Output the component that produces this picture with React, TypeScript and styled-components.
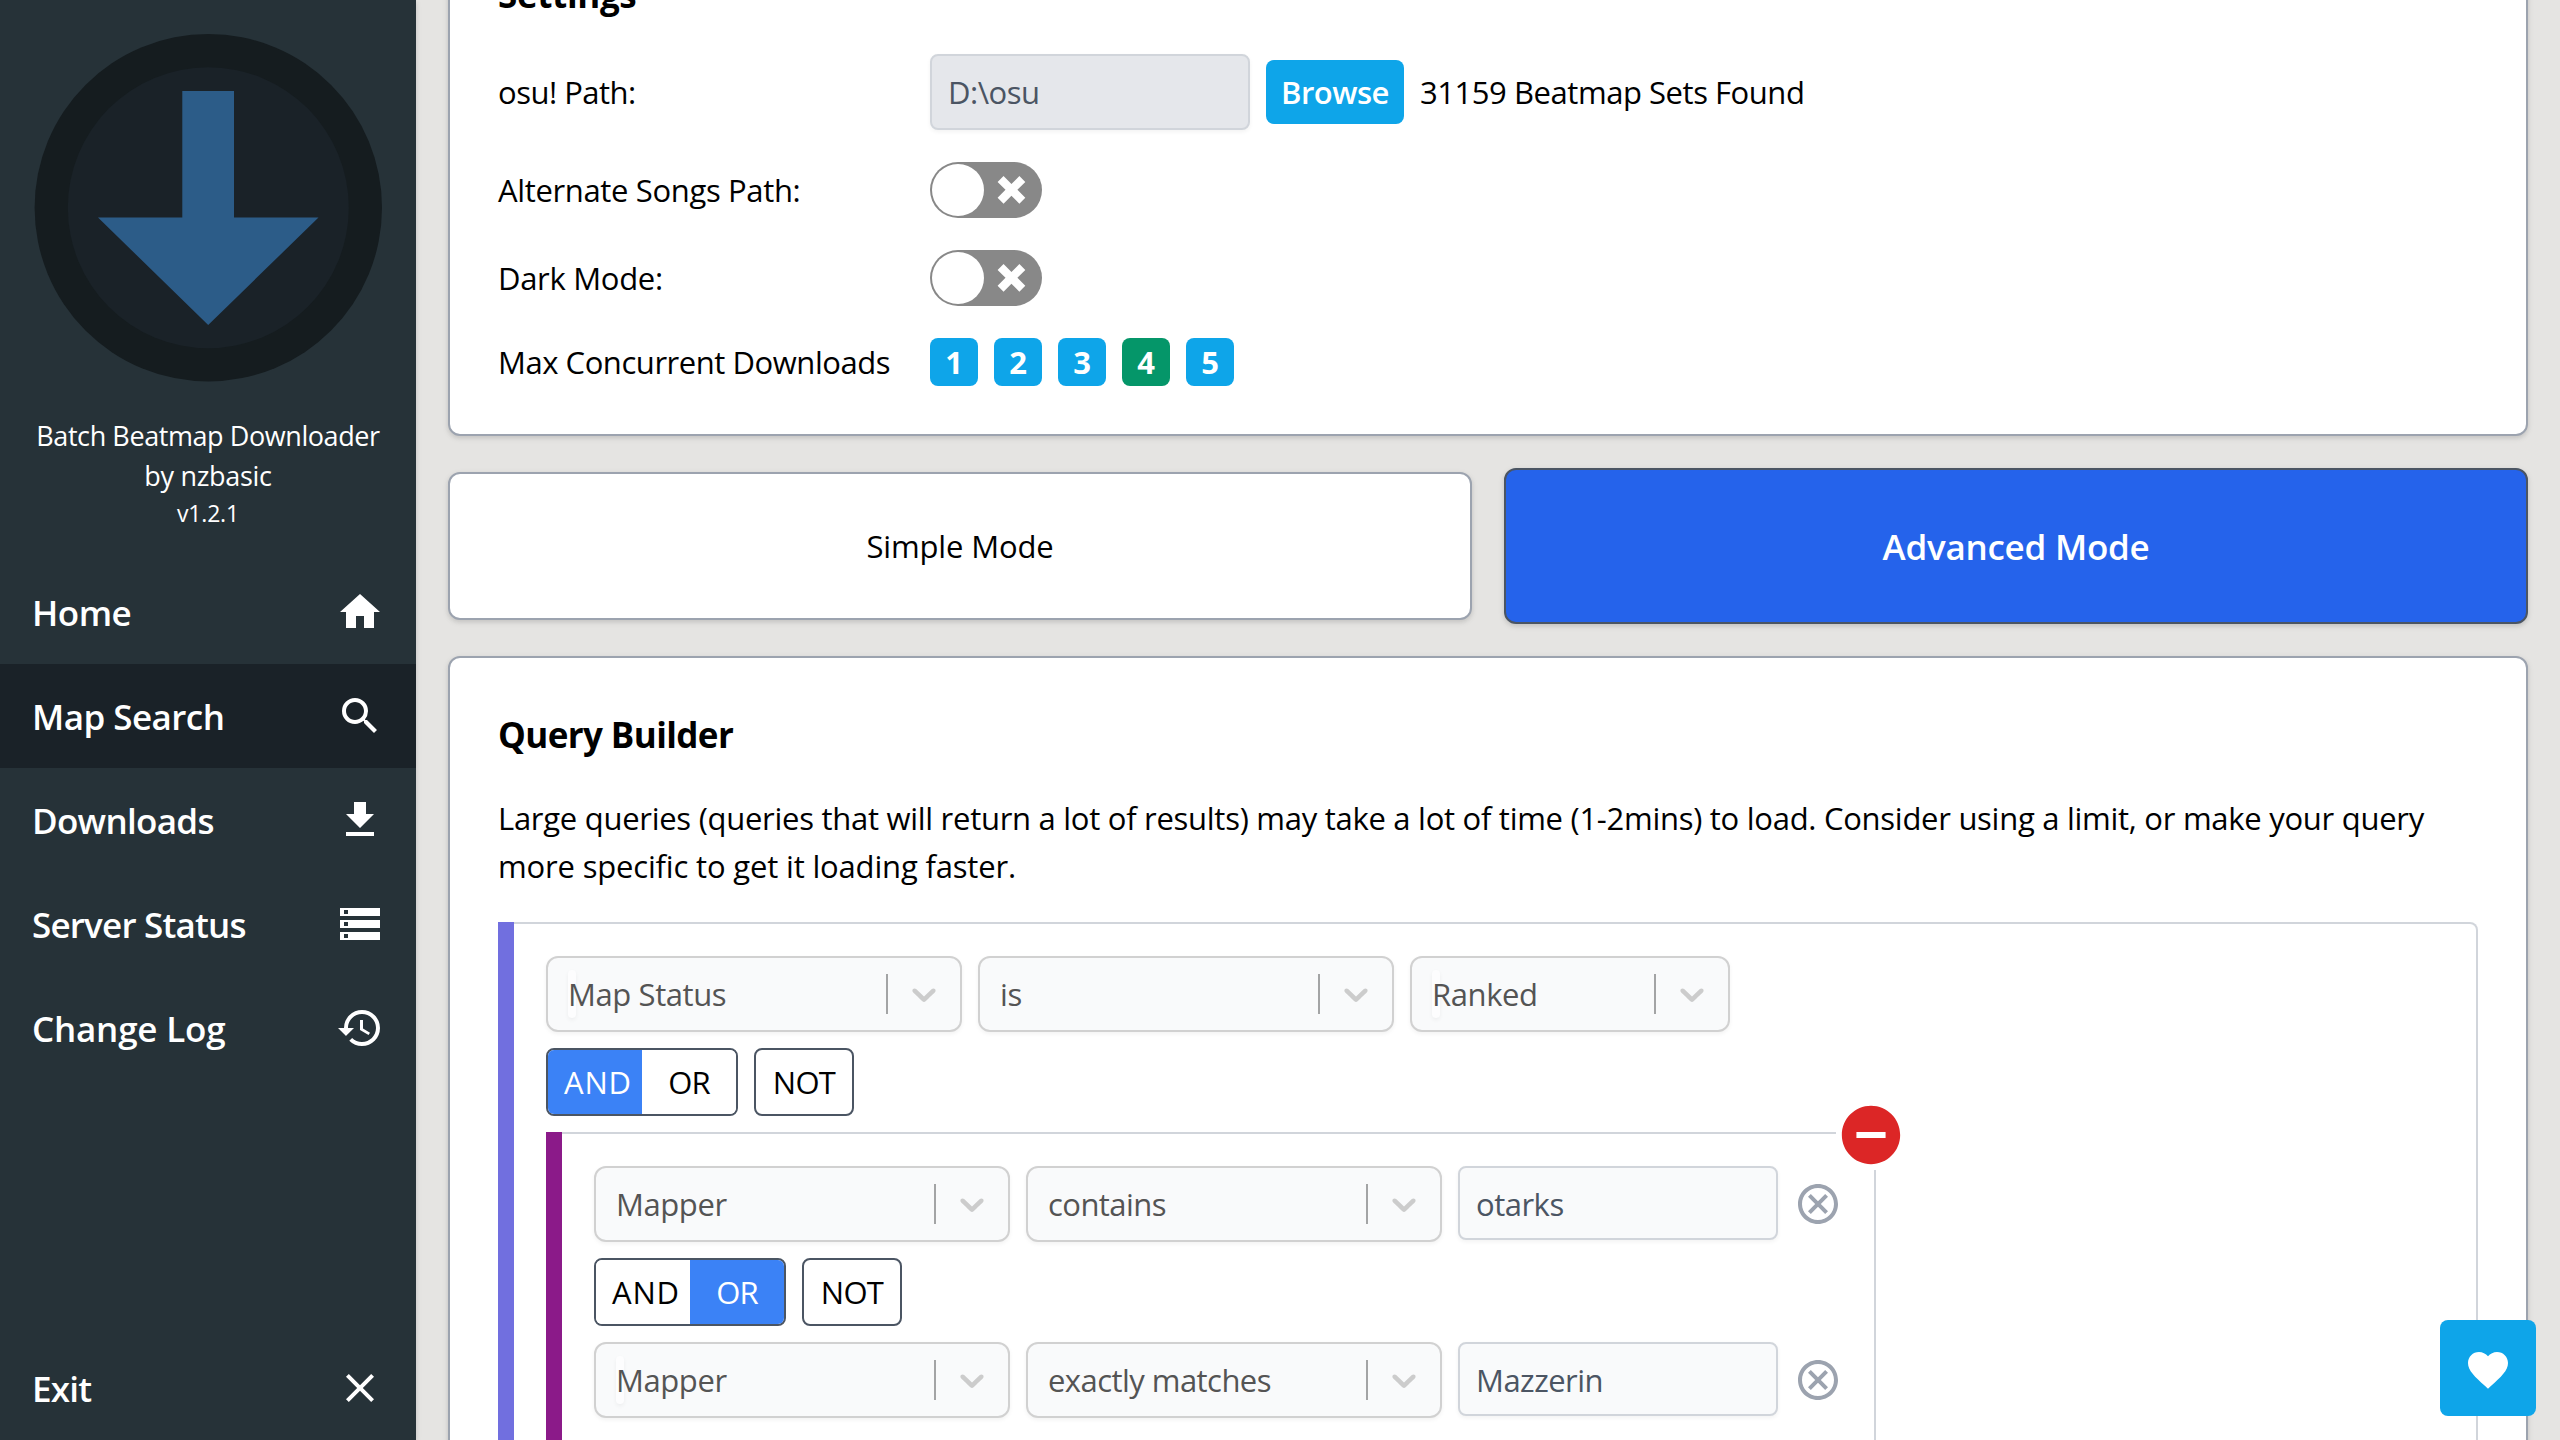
import React from "react";
import styled, { createGlobalStyle, css } from "styled-components";
import {
  MdHome,
  MdSearch,
  MdFileDownload,
  MdStorage,
  MdHistory,
  MdClose,
  MdFavorite,
  MdRemoveCircle,
  MdOutlineCancel,
} from "react-icons/md";

const GlobalStyle = createGlobalStyle`
  *, *::before, *::after { box-sizing: border-box; }
  body {
    margin: 0;
    overflow: hidden;
    background: #e5e4e2;
    color: #000;
    font-family: "Open Sans", "Noto Sans", sans-serif;
    font-size: 31px;
    line-height: 48px;
  }
  button, input { font: inherit; margin: 0; }
  svg { display: block; flex-shrink: 0; }
`;

/* Text run with its own tracking */
const T = styled.span<{ $ls: number }>`
  letter-spacing: ${(p) => p.$ls}px;
  white-space: nowrap;
`;

const Shell = styled.div`
  display: flex;
  height: 1440px;
  overflow: hidden;
`;

const Sidebar = styled.aside`
  display: flex;
  flex-direction: column;
  width: 416px;
  flex-shrink: 0;
  background: #263238;
  color: #fff;
  box-shadow: 0 2px 6px rgba(0, 0, 0, 0.1), 0 2px 4px rgba(0, 0, 0, 0.06);
`;

const Brand = styled.div`
  display: flex;
  flex-direction: column;
  align-items: center;
  height: 560px;
`;

const BrandLine = styled.div<{ $small?: boolean }>`
  font-size: ${(p) => (p.$small ? 23 : 27)}px;
  line-height: ${(p) => (p.$small ? 34 : 40)}px;
  white-space: nowrap;
`;

const NavItem = styled.a<{ $active?: boolean; $bottom?: boolean }>`
  display: flex;
  align-items: center;
  justify-content: space-between;
  height: 104px;
  padding: 0 32px;
  font-size: 35px;
  line-height: 56px;
  font-weight: 600;
  background: ${(p) => (p.$active ? "#1a2228" : "transparent")};
  ${(p) => p.$bottom && css`margin-top: auto;`}

  ${T} {
    padding-top: 2px;
  }
`;

const Main = styled.main`
  display: flex;
  flex-direction: column;
  flex: 1;
  min-width: 0;
  gap: 32px;
  height: 1600px;
  margin-top: -64px;
  padding: 0 32px;
`;

const Card = styled.section`
  background: #fff;
  border: 2px solid #9ca3af;
  border-radius: 12px;
  padding: 48px;
  box-shadow: 0 2px 6px rgba(0, 0, 0, 0.1), 0 2px 4px rgba(0, 0, 0, 0.06);
`;

const SettingsCard = styled(Card)`
  height: 500px;
  flex-shrink: 0;
  padding-top: 28px;
`;

const QueryCard = styled(Card)`
  flex: 1;
`;

const Title = styled.h2`
  margin: 0;
  padding-top: 2px;
  font-size: 35px;
  line-height: 54px;
  font-weight: 700;
`;

const SettingRow = styled.div<{ $h: number }>`
  display: flex;
  align-items: center;
  height: ${(p) => p.$h}px;
  margin-top: 32px;
`;

const SettingLabel = styled.label`
  width: 432px;
`;

const Controls = styled.div`
  display: flex;
  align-items: center;
  gap: 16px;
`;

const TextInput = styled.input<{ $disabled?: boolean }>`
  width: 320px;
  height: ${(p) => (p.$disabled ? 76 : 74)}px;
  padding: ${(p) => (p.$disabled ? 0 : 2)}px 16px 0;
  border: 2px solid #d1d5db;
  border-radius: 8px;
  background: ${(p) => (p.$disabled ? "#e5e7eb" : "#f9fafb")};
  color: #4b5563;
  letter-spacing: ${(p) => (p.$disabled ? -0.5 : -0.5)}px;
  outline: none;
  box-shadow: 0 2px 4px rgba(0, 0, 0, 0.05);
`;

const BrowseButton = styled.button`
  width: 138px;
  height: 64px;
  padding: 0;
  border: 0;
  border-radius: 8px;
  background: #0ea5e9;
  color: #fff;
  font-weight: 600;
`;

const CountButton = styled.button<{ $active?: boolean }>`
  width: 48px;
  height: 48px;
  padding: 0;
  border: 0;
  border-radius: 8px;
  background: ${(p) => (p.$active ? "#059669" : "#0ea5e9")};
  color: #fff;
  font-weight: 700;
`;

const SwitchTrack = styled.div`
  display: flex;
  align-items: center;
  justify-content: space-between;
  width: 112px;
  height: 56px;
  padding: 0 11px 0 2px;
  border-radius: 28px;
  background: #888;
`;

const SwitchKnob = styled.div`
  width: 52px;
  height: 52px;
  border-radius: 50%;
  background: #fff;
`;

const ModeRow = styled.div`
  display: flex;
  align-items: center;
  gap: 32px;
  height: 156px;
  flex-shrink: 0;
`;

const ModeButton = styled.button<{ $active?: boolean }>`
  flex: 1;
  height: ${(p) => (p.$active ? 156 : 148)}px;
  padding: 0;
  border: 2px solid ${(p) => (p.$active ? "#4b5563" : "#9ca3af")};
  border-radius: 12px;
  background: ${(p) => (p.$active ? "#2563eb" : "#fff")};
  color: ${(p) => (p.$active ? "#fff" : "#000")};
  box-shadow: 0 2px 6px rgba(0, 0, 0, 0.1), 0 2px 4px rgba(0, 0, 0, 0.06);
  ${(p) => p.$active && css`padding-top: 2px; font-size: 35px; font-weight: 600;`}
`;

const Description = styled.p`
  margin: 32px 0;
`;

const Group = styled.div<{ $color: string; $nested?: boolean }>`
  position: relative;
  display: flex;
  flex-direction: column;
  gap: 16px;
  width: ${(p) => (p.$nested ? "1330px" : "auto")};
  height: ${(p) => (p.$nested ? 560 : 900)}px;
  padding: 32px 32px 32px 48px;
  border: 2px solid #d1d5db;
  border-left: 0;
  border-radius: 0 8px 8px 0;

  &::before {
    content: "";
    position: absolute;
    left: 0;
    top: -2px;
    bottom: -2px;
    width: 16px;
    background: ${(p) => p.$color};
  }
`;

const RuleRow = styled.div`
  display: flex;
  align-items: flex-start;
  gap: 16px;
`;

const SelectBox = styled.div<{ $w: number }>`
  display: flex;
  align-items: center;
  width: ${(p) => p.$w}px;
  height: 76px;
  padding-left: 20px;
  border: 2px solid #d1d1d1;
  border-radius: 12px;
  background: #f9fafb;
  color: #545454;
  box-shadow: 0 2px 4px rgba(0, 0, 0, 0.05);
`;

const SelectValue = styled.div<{ $caret?: boolean }>`
  position: relative;
  z-index: 0;
  flex: 1;
  white-space: nowrap;
  ${(p) =>
    p.$caret &&
    css`
      &::before {
        content: "";
        position: absolute;
        z-index: -1;
        left: 0;
        top: 0;
        width: 8px;
        height: 48px;
        border-radius: 4px;
        background: #fdfdfe;
        box-shadow: 0 2px 4px rgba(0, 0, 0, 0.05);
      }
    `}
`;

const SelectDivider = styled.div`
  width: 2px;
  height: 40px;
  background: #a3a4a5;
`;

const SelectArrow = styled.svg`
  width: 40px;
  height: 40px;
  margin: 0 16px;
  fill: #cccccc;
`;

const Logic = styled.div`
  display: flex;
  width: 192px;
  height: 68px;
  border: 2px solid #4b5563;
  border-radius: 8px;
  overflow: hidden;
`;

const LogicOption = styled.div<{ $on?: boolean; $left?: boolean }>`
  display: flex;
  align-items: center;
  justify-content: ${(p) => (p.$left ? "flex-start" : "center")};
  padding-left: ${(p) => (p.$left ? 16 : 0)}px;
  width: 94px;
  background: ${(p) => (p.$on ? "#3b82f6" : "#fff")};
  color: ${(p) => (p.$on ? "#fff" : "#000")};
`;

const NotButton = styled.button`
  width: 100px;
  height: 68px;
  padding: 0;
  border: 2px solid #4b5563;
  border-radius: 8px;
  background: #fff;
  color: #000;
`;

const RemoveRule = styled.div`
  display: flex;
  align-items: center;
  height: 76px;
  color: #9ca3af;
`;

const RemoveGroup = styled.div`
  position: absolute;
  top: -34px;
  right: -32px;
  width: 70px;
  height: 70px;
  background: #fff;
  color: #dc2626;
`;

const SupportButton = styled.button`
  position: fixed;
  right: 24px;
  bottom: 24px;
  display: flex;
  align-items: center;
  justify-content: center;
  width: 96px;
  height: 96px;
  padding: 4px 0 0;
  border: 0;
  border-radius: 8px;
  background: #0ea5e9;
  color: #fff;
`;

const Logo = () => (
  <svg width="416" height="416" viewBox="0 0 416 416">
    <circle cx="208.3" cy="207.7" r="173.7" fill="#151c1f" />
    <circle cx="208.3" cy="207.7" r="140.5" fill="#1a2228" />
    <path d="M182.3 91H234v126.5h84.5L208.2 325 98 217.5h84.3z" fill="#2c5c88" />
  </svg>
);

const Switch = () => (
  <SwitchTrack>
    <SwitchKnob />
    <svg width="39.2" height="56" viewBox="-2 -5 14 20">
      <path
        d="M9.9 2.12L7.78 0 4.95 2.828 2.12 0 0 2.12l2.83 2.83L0 7.776 2.123 9.9 4.95 7.07 7.78 9.9 9.9 7.776 7.072 4.95 9.9 2.12"
        fill="#fff"
      />
    </svg>
  </SwitchTrack>
);

const Select = (p: { value: string; ls?: number; w?: number; caret?: boolean }) => (
  <SelectBox $w={p.w ?? 416}>
    <SelectValue $caret={p.caret}>
      <T $ls={p.ls ?? -0.4}>{p.value}</T>
    </SelectValue>
    <SelectDivider />
    <SelectArrow viewBox="0 0 20 20">
      <path d="M4.516 7.548c0.436-0.446 1.043-0.481 1.576 0l3.908 3.747 3.908-3.747c0.533-0.481 1.141-0.446 1.574 0 0.436 0.445 0.408 1.197 0 1.615-0.406 0.418-4.695 4.502-4.695 4.502-0.217 0.223-0.502 0.335-0.787 0.335s-0.57-0.112-0.789-0.335c0 0-4.287-4.084-4.695-4.502s-0.436-1.17 0-1.615z" />
    </SelectArrow>
  </SelectBox>
);

const LogicRow = (p: { value: "AND" | "OR" }) => (
  <RuleRow>
    <Logic>
      <LogicOption $left $on={p.value === "AND"}>
        <T $ls={0.8}>AND</T>
      </LogicOption>
      <LogicOption $on={p.value === "OR"}>
        <T $ls={-0.8}>OR</T>
      </LogicOption>
    </Logic>
    <NotButton>
      <T $ls={-0.7}>NOT</T>
    </NotButton>
  </RuleRow>
);

const MapperRule = (p: { op: string; value: string; caret?: boolean }) => (
  <RuleRow>
    <Select value="Mapper" caret={p.caret} />
    <Select value={p.op} ls={-0.55} />
    <TextInput readOnly value={p.value} />
    <RemoveRule>
      <MdOutlineCancel size={48} />
    </RemoveRule>
  </RuleRow>
);

const NAV = [
  { label: "Home", Icon: MdHome, ls: -0.5 },
  { label: "Map Search", Icon: MdSearch, ls: -0.55, active: true },
  { label: "Downloads", Icon: MdFileDownload, ls: -0.7 },
  { label: "Server Status", Icon: MdStorage, ls: -0.8 },
  { label: "Change Log", Icon: MdHistory, ls: -0.2 },
  { label: "Exit", Icon: MdClose, ls: -0.8, bottom: true },
];

export default function App() {
  return (
    <>
      <GlobalStyle />
      <Shell>
        <Sidebar>
          <Brand>
            <Logo />
            <BrandLine>
              <T $ls={-0.42}>Batch Beatmap Downloader</T>
            </BrandLine>
            <BrandLine>
              <T $ls={-0.3}>by nzbasic</T>
            </BrandLine>
            <BrandLine $small>
              <T $ls={-0.2}>v1.2.1</T>
            </BrandLine>
          </Brand>
          {NAV.map(({ label, Icon, ls, active, bottom }) => (
            <NavItem key={label} $active={active} $bottom={bottom}>
              <T $ls={ls}>{label}</T>
              <Icon size={48} />
            </NavItem>
          ))}
        </Sidebar>

        <Main>
          <SettingsCard>
            <Title>
              <T $ls={-0.35}>Settings</T>
            </Title>
            <SettingRow $h={76}>
              <SettingLabel>
                <T $ls={-0.5}>osu! Path:</T>
              </SettingLabel>
              <Controls>
                <TextInput $disabled readOnly value="D:\osu" />
                <BrowseButton>
                  <T $ls={-0.5}>Browse</T>
                </BrowseButton>
                <T $ls={-0.45}>31159 Beatmap Sets Found</T>
              </Controls>
            </SettingRow>
            <SettingRow $h={56}>
              <SettingLabel>
                <T $ls={-0.35}>Alternate Songs Path:</T>
              </SettingLabel>
              <Switch />
            </SettingRow>
            <SettingRow $h={56}>
              <SettingLabel>
                <T $ls={-0.3}>Dark Mode:</T>
              </SettingLabel>
              <Switch />
            </SettingRow>
            <SettingRow $h={48}>
              <SettingLabel>
                <T $ls={-0.45}>Max Concurrent Downloads</T>
              </SettingLabel>
              <Controls>
                {[1, 2, 3, 4, 5].map((n) => (
                  <CountButton key={n} $active={n === 4}>
                    {n}
                  </CountButton>
                ))}
              </Controls>
            </SettingRow>
          </SettingsCard>

          <ModeRow>
            <ModeButton>
              <T $ls={-0.15}>Simple Mode</T>
            </ModeButton>
            <ModeButton $active>
              <T $ls={-0.25}>Advanced Mode</T>
            </ModeButton>
          </ModeRow>

          <QueryCard>
            <Title>
              <T $ls={-0.6}>Query Builder</T>
            </Title>
            <Description>
              <T $ls={-0.275}>
                Large queries (queries that will return a lot of results) may take a lot of time
                (1-2mins) to load. Consider using a limit, or make your query
              </T>
              <br />
              <T $ls={-0.17}>more specific to get it loading faster.</T>
            </Description>
            <Group $color="#716fdf">
              <RuleRow>
                <Select value="Map Status" caret />
                <Select value="is" />
                <Select value="Ranked" w={320} caret />
              </RuleRow>
              <LogicRow value="AND" />
              <Group $color="#8b1a89" $nested>
                <MapperRule op="contains" value="otarks" />
                <LogicRow value="OR" />
                <MapperRule op="exactly matches" value="Mazzerin" caret />
                <RemoveGroup>
                  <MdRemoveCircle size={70} />
                </RemoveGroup>
              </Group>
            </Group>
          </QueryCard>
        </Main>
      </Shell>
      <SupportButton>
        <MdFavorite size={48} />
      </SupportButton>
    </>
  );
}
